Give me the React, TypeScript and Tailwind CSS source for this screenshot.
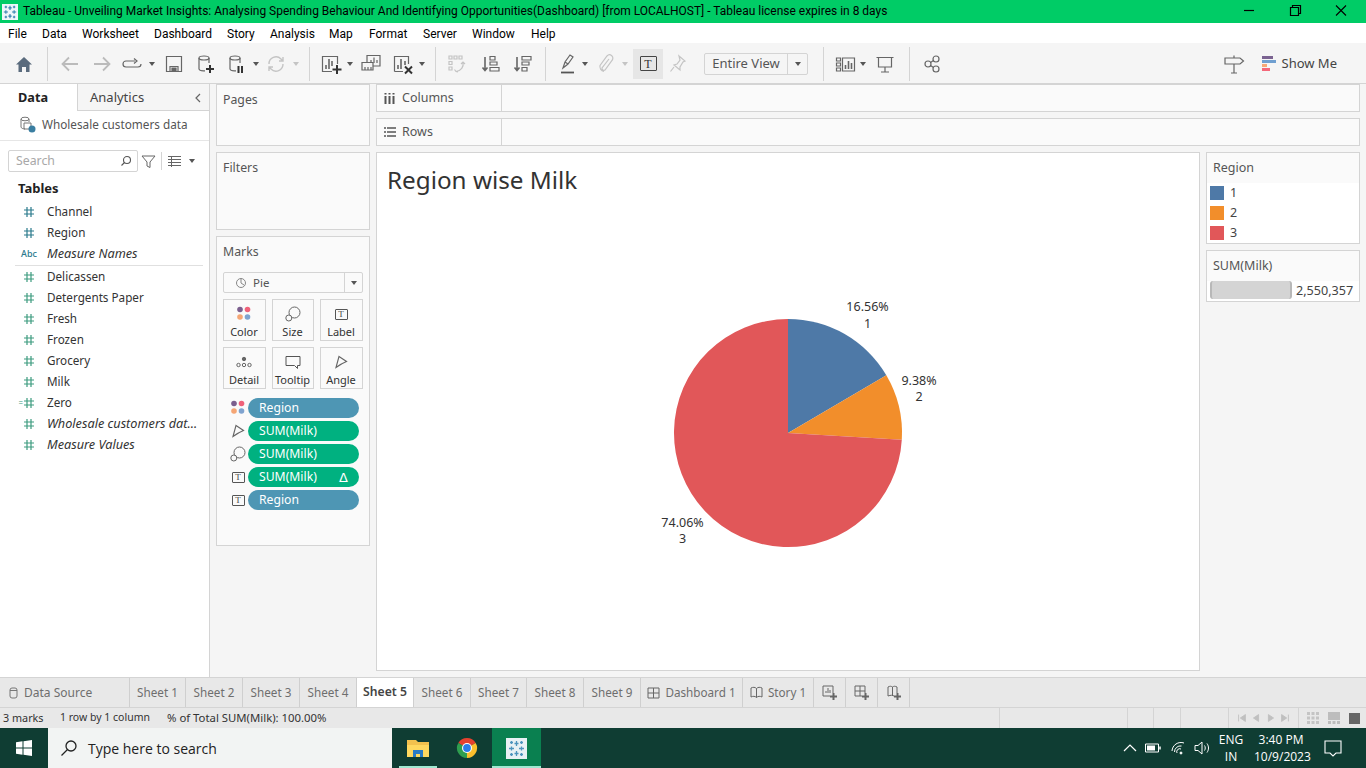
import React from "react";

const S = ({ children, className = "", w = 24 }: { children?: React.ReactNode; className?: string; w?: number }) => (
  <svg width={w} height={w} viewBox={`0 0 ${w} ${w}`} fill="none" stroke="currentColor" strokeWidth="1.2" className={"shrink-0 " + className}>
    {children}
  </svg>
);
const Caret = ({ c = "text-[#555]", ml = "" }: { c?: string; ml?: string }) => (
  <div className={"w-[10px] flex justify-center shrink-0 " + ml + " " + c}>
    <div className="w-0 h-0 border-l-[3.5px] border-r-[3.5px] border-t-[4px] border-l-transparent border-r-transparent border-t-current" />
  </div>
);
const Div = ({ ml }: { ml: string }) => <div className={"w-px h-[34px] bg-[#d4d4d4] shrink-0 " + ml} />;

const Hash = ({ c }: { c: string }) => (
  <svg width="12" height="12" viewBox="0 0 12 12" stroke={c} strokeWidth="1.2" fill="none">
    <path d="M4 1v10M8 1v10M1 4h10M1 8h10" />
  </svg>
);

const TBox = () => (
  <div className="w-[13px] h-[11px] border border-[#555] rounded-[1px] flex items-center justify-center text-[9px] leading-none text-[#444] font-['Liberation_Serif',serif] shrink-0">T</div>
);
const Dots = () => (
  <svg width="16" height="16" viewBox="0 0 16 16">
    <circle cx="4" cy="3.500" r="2.800" fill="#7b5f8e" />
    <circle cx="11.500" cy="3.500" r="2.800" fill="#f0627a" />
    <circle cx="4" cy="11" r="2.800" fill="#f5a675" />
    <circle cx="11.500" cy="11" r="2.800" fill="#7fa3cf" />
  </svg>
);
const SizeIcon = ({ c = "#666" }: { c?: string }) => (
  <svg width="16" height="16" viewBox="0 0 16 16" fill="none" stroke={c} strokeWidth="1">
    <circle cx="9.500" cy="6.500" r="5.500" />
    <circle cx="3.800" cy="12" r="3" fill="#fafafa" />
  </svg>
);
const AngleIcon = () => (
  <svg width="14" height="14" viewBox="0 0 14 14" fill="none" stroke="#666" strokeWidth="1.100">
    <path d="M5 1.500 12.500 6.500Q7.500 8.500 2 12.500Z" />
  </svg>
);

const fields = [
  { n: "Channel", c: "#2a7a8c" },
  { n: "Region", c: "#2a7a8c" },
];
const measures = [
  { n: "Delicassen", i: false },
  { n: "Detergents Paper", i: false },
  { n: "Fresh", i: false },
  { n: "Frozen", i: false },
  { n: "Grocery", i: false },
  { n: "Milk", i: false },
  { n: "Zero", i: false, eq: true },
  { n: "Wholesale customers dat...", i: true },
  { n: "Measure Values", i: true },
];

const Row = ({ icon, name, italic }: { icon: React.ReactNode; name: string; italic?: boolean }) => (
  <div className="h-[21px] flex items-center">
    <div className="w-[47px] pl-[20px] pr-[9px] flex justify-center shrink-0">{icon}</div>
    <span className={"text-[#333] whitespace-nowrap " + (italic ? "italic text-[12.700px]" : "text-[11.700px]")}>{name}</span>
  </div>
);

const MarkBtn = ({ icon, label, w }: { icon: React.ReactNode; label: string; w: string }) => (
  <div className={"h-[42px] border border-[#d4d4d4] flex flex-col items-center pt-[5px] pr-px " + w}>
    <div className="h-[18px] flex items-center justify-center">{icon}</div>
    <span className="text-[11px] leading-[14px] mt-[2px] text-[#333]">{label}</span>
  </div>
);

const Pill = ({ icon, label, color, delta }: { icon: React.ReactNode; label: string; color: string; delta?: boolean }) => (
  <div className="h-[20px] mb-[3px] flex items-center pl-[12px]">
    <div className="w-[18px] flex justify-center shrink-0 mr-[1px]">{icon}</div>
    <div className={"w-[111px] h-[20px] rounded-full text-white text-[12.200px] leading-[20px] pl-[11px] pr-[11px] flex justify-between items-center " + color}>
      <span>{label}</span>
      {delta && <span className="text-[13px] leading-none font-['DejaVu_Sans',sans-serif]">Δ</span>}
    </div>
  </div>
);

const Tab = ({ w, children, active }: { w: string; children: React.ReactNode; active?: boolean }) => (
  <div className={"h-full border-r border-[#cfcfcf] flex items-center justify-center shrink-0 whitespace-nowrap " + w + " " + (active ? "bg-white font-semibold text-[#444] text-[12.200px]" : "text-[#6e6e6e] text-[11.700px]")}>
    {children}
  </div>
);

const pt = (a: number, r = 114) => {
  const t = (a * Math.PI) / 180;
  return `${114 + r * Math.sin(t)} ${114 - r * Math.cos(t)}`;
};
const slice = (a: number, b: number) =>
  `M114 114 L${pt(a)} A114 114 0 ${b - a > 180 ? 1 : 0} 1 ${pt(b)} Z`;

const Flake = ({ size, c }: { size: number; c: string }) => (
  <svg width={size} height={size} viewBox="0 0 17 17" stroke={c} strokeWidth="1.300">
    <path d="M8.500 1v5M6.500 3.500h4M8.500 11v5M6.500 13.500h4M1 8.500h5M3.500 6.500v4M11 8.500h5M13.500 6.500v4M3.500 1v3M2 2.500h3M13.500 1v3M12 2.500h3M3.500 13v3M2 14.500h3M13.500 13v3M12 14.500h3" />
  </svg>
);

export default function App() {
  return (
    <div className="w-[1366px] h-[768px] overflow-hidden flex flex-col bg-[#f5f5f5] font-['Noto_Sans',sans-serif] text-[#333]">
      {/* Title bar */}
      <div className="h-[23px] bg-[#00cc66] flex items-center shrink-0 font-['Roboto',sans-serif]">
        <div className="w-[16px] h-[16px] ml-[2px] bg-[#eef6fa] flex items-center justify-center shrink-0">
          <Flake size={14} c="#2f7fae" />
        </div>
        <span className="ml-[5px] text-[11.970px] text-black whitespace-nowrap">Tableau - Unveiling Market Insights: Analysing Spending Behaviour And Identifying Opportunities(Dashboard) [from LOCALHOST] - Tableau license expires in 8 days</span>
        <div className="ml-auto mr-[2px] flex items-center text-black">
          <svg width="46" height="23" viewBox="0 0 46 23" stroke="currentColor" fill="none" strokeWidth="1.200"><path d="M18 10.500h10" /></svg>
          <svg width="46" height="23" viewBox="0 0 46 23" stroke="currentColor" fill="none" strokeWidth="1.200"><path d="M18.500 7.500h8v8h-8zM20.500 7.500v-2h8v8h-2" /></svg>
          <svg width="46" height="23" viewBox="0 0 46 23" stroke="currentColor" fill="none" strokeWidth="1.100"><path d="M18 5.500l10 10M28 5.500l-10 10" /></svg>
        </div>
      </div>

      {/* Menu bar */}
      <div className="h-[20px] bg-white flex items-center shrink-0 text-[12px] text-black font-['Roboto',sans-serif] pt-px">
        <div className="ml-[8px] w-[34px]">File</div>
        <div className="w-[40px]">Data</div>
        <div className="w-[72px]">Worksheet</div>
        <div className="w-[73px]">Dashboard</div>
        <div className="w-[43px]">Story</div>
        <div className="w-[59px]">Analysis</div>
        <div className="w-[40px]">Map</div>
        <div className="w-[54px]">Format</div>
        <div className="w-[49px]">Server</div>
        <div className="w-[59px]">Window</div>
        <div>Help</div>
      </div>

      {/* Toolbar */}
      <div className="h-[41px] bg-[#f5f5f5] border-b border-[#d4d4d4] flex items-center shrink-0 text-[#666] pt-px">
        <S className="ml-[12px] text-[#5a6b7d]">
          <path d="M4 12.500 12 5l8 7.500h-2.500V20H14v-5h-4v5H6.500v-7.500Z" fill="currentColor" stroke="none" />
        </S>
        <Div ml="ml-[11px]" />
        <S className="ml-[10px] text-[#bbb]" ><path d="M20 12H5M11 5.500 4.500 12l6.500 6.500" strokeWidth="1.800" /></S>
        <S className="ml-[8px] text-[#bbb]"><path d="M4 12h15M13 5.500l6.500 6.500-6.500 6.500" strokeWidth="1.800" /></S>
        <S className="ml-[6px]"><path d="M15 9H6a3 3 0 0 0 0 6h12a3 3 0 0 0 3-3" /><path d="M14 6.500 17 9l-3 2.500" /></S>
        <Caret ml="ml-[3px]" />
        <S className="ml-[5px]"><path d="M4.500 4.500h15v15h-15zM8 19.500v-5h8v5" /><path d="M10 19v-3h4v3" fill="currentColor" /></S>
        <S className="ml-[7px]"><ellipse cx="11" cy="6" rx="5" ry="2" /><path d="M6 6v11a5 2 0 0 0 6 1.800M16 6v5" /><path d="M17 13v8M13 17h8" stroke="#333" strokeWidth="2" /></S>
        <S className="ml-[7px]"><ellipse cx="11" cy="6" rx="5" ry="2" /><path d="M6 6v11a5 2 0 0 0 6 1.800M16 6v5" /><path d="M14.500 14v7M18 14v7" stroke="#333" strokeWidth="2" /></S>
        <Caret ml="ml-[3px]" />
        <S className="ml-[3px] text-[#c4c4c4]"><path d="M5 12a7 7 0 0 1 12-5l2 2M19 12a7 7 0 0 1-12 5l-2-2M19 5v4h-4M5 19v-4h4" strokeWidth="1.400" /></S>
        <Caret ml="ml-[3px]" c="text-[#c4c4c4]" />
        <Div ml="ml-[8px]" />
        <S className="ml-[9px]"><path d="M13 19.500H3.500v-15h15V12" /><path d="M7 17v-4M10 17V7M13 14V9" strokeWidth="1.600" /><path d="M18 13v9M13.500 17.500h9" stroke="#333" strokeWidth="2" /></S>
        <Caret ml="ml-[2px]" />
        <S className="ml-[4px]"><path d="M8 10V3.500h13V14h-7" /><path d="M12 11V8M15 11V5.500M18 11V8" /><path d="M3 10.500h11V18H3z" fill="#f5f5f5" /><path d="M6 18v-3M9 18v-3M12 18v-3" /></S>
        <S className="ml-[8px]"><path d="M3.500 19.500v-15h14V12M12 19.500H3.500" /><path d="M7 17v-4M10 17V7M14 13V9" strokeWidth="1.600" /><path d="M14 14.500l7 7M21 14.500l-7 7" stroke="#333" strokeWidth="2" /></S>
        <Caret ml="ml-[2px]" />
        <Div ml="ml-[8px]" />
        <S className="ml-[9px] text-[#c4c4c4]"><path d="M4 4h3v3H4zM9 4h3v3H9zM14 4h3v3h-3zM4 9.500h3v3H4zM4 15h3v3H4z" /><path d="M18 10c1 5-2 9-7 9.500M9.500 17.500 11 19.500l2 .5M16 12l2-2 2 2" /></S>
        <S className="ml-[9px]"><path d="M7 5v13M4.500 15.500 7 18.500l2.500-3" strokeWidth="1.600" /><path d="M12 4.500h5v3.500h-5zM12 10h7v3h-7zM12 15.500h9v3.500h-9z" /></S>
        <S className="ml-[8px]"><path d="M7 5v13M4.500 15.500 7 18.500l2.500-3" strokeWidth="1.600" /><path d="M12 4.500h9v3.500h-9zM12 10h7v3h-7zM12 15.500h5v3.500h-5z" /></S>
        <Div ml="ml-[11px]" />
        <S className="ml-[10px]"><path d="M7 16l2-6 5-7 3 2-5 7-5 4ZM9 10l3 2" /><path d="M5 20.500h13" stroke="#555" strokeWidth="1.800" /></S>
        <Caret />
        <S className="ml-[3px] text-[#c4c4c4]"><path d="M16 7l-7 9a2 2 0 0 0 3 2l7-9.500a3.300 3.300 0 0 0-5-4.500l-7 9.500a5 5 0 0 0 4 6" strokeWidth="1.200" /></S>
        <Caret ml="ml-[3px]" c="text-[#c4c4c4]" />
        <div className="ml-[3px] w-[30px] h-[30px] bg-[#e6e6e6] flex items-center justify-center shrink-0">
          <div className="w-[17px] h-[15px] border border-[#444] rounded-[1px] flex items-center justify-center text-[12px] leading-none text-[#333] font-['Liberation_Serif',serif]">T</div>
        </div>
        <S className="ml-[2px] text-[#c4c4c4]"><path d="M14 4l6 5-2 1-3 5 0 3-6-5 3-1 3-4ZM9 15l-3.500 4.500" /></S>
        <div className="ml-[15px] w-[104px] h-[22px] border border-[#d4d4d4] rounded-[2px] flex items-center shrink-0">
          <span className="w-[82px] text-center text-[13px] text-[#555] whitespace-nowrap">Entire View</span>
          <div className="flex-1 h-full border-l border-[#d4d4d4] flex items-center justify-center text-[#555]"><Caret /></div>
        </div>
        <Div ml="ml-[15px]" />
        <S className="ml-[10px]"><path d="M2.500 6h4v3h-4zM2.500 11h4v3h-4zM2.500 16h4v3h-4zM8.500 6h12v13h-12z" /><path d="M11.500 17v-4M14.500 17V9M17.500 17v-6" strokeWidth="1.600" /></S>
        <Caret />
        <S className="ml-[5px]"><path d="M3.500 5.500h17M5.500 5.500V15h13V5.500M12 15v5M8 20h8" /></S>
        <Div ml="ml-[12px]" />
        <S className="ml-[10px]"><circle cx="8" cy="12" r="3" /><circle cx="16" cy="7" r="3" /><circle cx="16" cy="17" r="3" /><path d="M10.500 10.500l3-2M10.500 13.500l3 2" /></S>
        <div className="ml-auto flex items-center">
          <S className=""><path d="M3 6h15l3.500 3-3.500 3H3zM12 12v9M9 21h6M12 3.500V6" /></S>
          <svg width="14" height="15" viewBox="0 0 14 15" className="ml-[16px]">
            <rect x="0" y="0" width="11" height="3" fill="#7b6391" />
            <rect x="0" y="4" width="14" height="3" fill="#6f9fd0" />
            <rect x="0" y="8" width="5" height="3" fill="#f6a877" />
            <rect x="0" y="12" width="8" height="3" fill="#f4687a" />
          </svg>
          <span className="ml-[6px] mr-[29px] text-[13px] text-[#444]">Show Me</span>
        </div>
      </div>

      {/* Main */}
      <div className="flex-1 min-h-0 flex border-b border-[#d4d4d4]">
        {/* Left data panel */}
        <div className="w-[210px] shrink-0 bg-white border-r border-[#d4d4d4] flex flex-col">
          <div className="h-[27px] flex shrink-0">
            <div className="w-[77px] flex items-center pl-[18px] text-[12.700px] font-bold text-[#222]">Data</div>
            <div className="flex-1 bg-[#f5f5f5] border-l border-b border-[#d4d4d4] flex items-center justify-between pl-[12px] pr-[6px] pt-px text-[13px] text-[#444]">
              <span>Analytics</span>
              <svg width="10" height="12" viewBox="0 0 10 12" fill="none" stroke="#666" strokeWidth="1.200"><path d="M7 2 3 6l4 4" /></svg>
            </div>
          </div>
          <div className="h-[30px] border-b border-[#e6e6e6] flex items-center pl-[19px] pb-[2px] shrink-0">
            <svg width="17" height="17" viewBox="0 0 17 17" fill="none" stroke="#777" strokeWidth="1">
              <ellipse cx="6" cy="3" rx="4" ry="1.800" /><path d="M2 3v8c0 1 2 2 4 2M10 3v3" />
              <path d="M5 7h7v6H5z" /><circle cx="13" cy="13" r="3.500" fill="#3a7ea1" stroke="none" />
            </svg>
            <span className="ml-[6px] text-[11.750px] text-[#555] whitespace-nowrap">Wholesale customers data</span>
          </div>
          <div className="h-[40px] flex items-center pl-[8px] shrink-0">
            <div className="w-[130px] h-[22px] border border-[#d4d4d4] rounded-[2px] flex items-center justify-between pl-[7px] pr-[5px]">
              <span className="text-[12.300px] text-[#a8a8a8]">Search</span>
              <svg width="12" height="12" viewBox="0 0 12 12" fill="none" stroke="#555" strokeWidth="1.100"><circle cx="7" cy="5" r="3.500" /><path d="M4.500 7.500 1.500 10.500" /></svg>
            </div>
            <svg width="15" height="15" viewBox="0 0 15 15" fill="none" stroke="#666" className="ml-[3px]"><path d="M1 2h13L9 8v5.500L6 12V8Z" /></svg>
            <div className="w-px h-[18px] bg-[#d4d4d4] ml-[5px]" />
            <svg width="13" height="11" viewBox="0 0 13 11" fill="none" stroke="#666" strokeWidth="1" className="ml-[6px]"><path d="M0 .5h13M0 3.500h13M0 6.500h13M0 9.500h13M3.500 0v11" /></svg>
            <div className="ml-[6px]"><Caret /></div>
          </div>
          <div className="h-[18px] -mt-px pl-[18px] text-[13px] leading-[16px] font-bold text-[#222] shrink-0">Tables</div>
          <div className="pt-[3px]">
            {fields.map((f) => <Row key={f.n} icon={<Hash c={f.c} />} name={f.n} />)}
            <div className="h-[21px] flex items-center">
              <div className="w-[47px] pl-[20px] pr-[9px] text-[9px] text-[#2a7a8c] font-medium shrink-0 text-center">Abc</div>
              <span className="text-[12.700px] italic text-[#333]">Measure Names</span>
            </div>
            <div className="h-px bg-[#e0e0e0] ml-[15px] mr-[6px] mt-px" />
            {measures.map((m) => (
              <Row
                key={m.n}
                name={m.n}
                italic={m.i}
                icon={
                  <div className="relative">
                    <Hash c="#3d9b7f" />
                    {m.eq && <span className="absolute right-[12px] top-[-1px] text-[8px] leading-[14px] text-[#3d9b7f]">=</span>}
                  </div>
                }
              />
            ))}
          </div>
        </div>

        {/* Cards column */}
        <div className="w-[154px] ml-[6px] shrink-0 flex flex-col gap-[6px]">
          <div className="h-[62px] bg-[#fafafa] border border-[#d4d4d4] pl-[6px] pt-[6px] text-[12.300px] text-[#555]">Pages</div>
          <div className="h-[78px] bg-[#fafafa] border border-[#d4d4d4] pl-[6px] pt-[6px] text-[12.300px] text-[#555]">Filters</div>
          <div className="h-[310px] bg-[#fafafa] border border-[#d4d4d4]">
            <div className="pl-[6px] pt-[6px] text-[12.300px] text-[#555] h-[35px]">Marks</div>
            <div className="mx-[6px] h-[21px] border border-[#d4d4d4] rounded-[2px] flex items-center">
              <svg width="12" height="12" viewBox="0 0 12 12" fill="none" stroke="#888" className="ml-[11px]"><circle cx="6" cy="6" r="4.500" /><path d="M6 1.500V6l3 2" /></svg>
              <span className="ml-[6px] text-[11.500px] text-[#555]">Pie</span>
              <div className="ml-auto w-[18px] h-full border-l border-[#d4d4d4] flex items-center justify-center"><Caret /></div>
            </div>
            <div className="mx-[6px] mt-[6px] flex justify-between">
              <MarkBtn w="w-[43px]" icon={<Dots />} label="Color" />
              <MarkBtn w="w-[42px]" icon={<SizeIcon />} label="Size" />
              <MarkBtn w="w-[43px]" icon={<TBox />} label="Label" />
            </div>
            <div className="mx-[6px] mt-[6px] flex justify-between">
              <MarkBtn w="w-[43px]" icon={<svg width="16" height="12" viewBox="0 0 16 12" fill="none" stroke="#666"><circle cx="8" cy="3" r="1.700" fill="#666" /><circle cx="2.500" cy="9" r="1.700" /><circle cx="8" cy="9" r="1.700" /><circle cx="13.500" cy="9" r="1.700" /></svg>} label="Detail" />
              <MarkBtn w="w-[42px]" icon={<svg width="16" height="15" viewBox="0 0 16 15" fill="none" stroke="#555"><path d="M1 1.500h14v9h-2.500v3l-3-3H1Z" /></svg>} label="Tooltip" />
              <MarkBtn w="w-[43px]" icon={<AngleIcon />} label="Angle" />
            </div>
            <div className="mt-[9px]">
              <Pill icon={<Dots />} label="Region" color="bg-[#4e96b4]" />
              <Pill icon={<AngleIcon />} label="SUM(Milk)" color="bg-[#00b180]" />
              <Pill icon={<SizeIcon />} label="SUM(Milk)" color="bg-[#00b180]" />
              <Pill icon={<TBox />} label="SUM(Milk)" color="bg-[#00b180]" delta />
              <Pill icon={<TBox />} label="Region" color="bg-[#4e96b4]" />
            </div>
          </div>
        </div>

        {/* Right area */}
        <div className="flex-1 min-w-0 ml-[6px] mr-[6px] flex flex-col">
          <div className="h-[28px] bg-[#fafafa] border border-[#d4d4d4] flex shrink-0">
            <div className="w-[125px] h-full border-r border-[#d4d4d4] flex items-center pl-[7px] text-[12.500px] text-[#555]">
              <svg width="11" height="11" viewBox="0 0 11 11" stroke="#555" strokeWidth="2" fill="none"><path d="M1.500 3v8M5.500 3v8M9.500 3v8M1.500 0v1.500M5.500 0v1.500M9.500 0v1.500" /></svg>
              <span className="ml-[7px]">Columns</span>
            </div>
          </div>
          <div className="h-[28px] mt-[6px] bg-[#fafafa] border border-[#d4d4d4] flex shrink-0">
            <div className="w-[125px] h-full border-r border-[#d4d4d4] flex items-center pl-[7px] text-[12.500px] text-[#555]">
              <svg width="12" height="10" viewBox="0 0 12 10" stroke="#555" strokeWidth="1.500" fill="none"><path d="M0 1h2M3 1h9M0 5h2M3 5h9M0 9h2M3 9h9" /></svg>
              <span className="ml-[6px]">Rows</span>
            </div>
          </div>
          <div className="flex-1 min-h-0 mt-[6px] mb-[6px] flex gap-[6px]">
            {/* Canvas */}
            <div className="w-[824px] shrink-0 bg-white border border-[#d4d4d4] flex flex-col">
              <div className="pl-[10px] pt-[10px] text-[24.250px] leading-[33px] text-[#333] h-[126px] shrink-0">Region wise Milk</div>
              <div className="flex justify-center">
                <svg width="360" height="300" viewBox="-66 -40 360 300" className="overflow-visible ml-[-1px]">
                  <path d={slice(0, 59.62)} fill="#4e79a7" />
                  <path d={slice(59.62, 93.39)} fill="#f28e2b" />
                  <path d={slice(93.39, 360)} fill="#e15759" />
                  <g fontSize="12.500" fill="#333" textAnchor="middle" fontFamily="'Noto Sans', sans-serif">
                    <text x="193.500" y="-8.500">16.56%</text>
                    <text x="193.500" y="8.500">1</text>
                    <text x="245" y="65.500">9.38%</text>
                    <text x="245" y="81.500">2</text>
                    <text x="8.500" y="207.500">74.06%</text>
                    <text x="8.500" y="223.500">3</text>
                  </g>
                </svg>
              </div>
            </div>
            {/* Legends */}
            <div className="flex-1 flex flex-col gap-[6px]">
              <div className="h-[92px] bg-white border border-[#d4d4d4]">
                <div className="h-[30px] bg-[#fafafa] pl-[6px] flex items-center text-[12.500px] text-[#555]">Region</div>
                {[
                  ["1", "bg-[#4e79a7]"],
                  ["2", "bg-[#f28e2b]"],
                  ["3", "bg-[#e15759]"],
                ].map(([n, c]) => (
                  <div key={n} className="h-[20px] flex items-center pl-[3px]">
                    <div className={"w-[14px] h-[14px] " + c} />
                    <span className="ml-[6px] text-[12.500px] text-[#444]">{n}</span>
                  </div>
                ))}
              </div>
              <div className="h-[52px] bg-white border border-[#d4d4d4]">
                <div className="h-[30px] bg-[#fafafa] pl-[6px] flex items-center text-[12.500px] text-[#555]">SUM(Milk)</div>
                <div className="flex items-center pl-[3px] h-[20px]">
                  <div className="w-[82px] h-[18px] bg-[#d4d4d4] rounded-[3px] border-x-2 border-[#b8b8b8] -mt-[2px]" />
                  <span className="ml-[4px] text-[12.600px] text-[#444]">2,550,357</span>
                </div>
              </div>
            </div>
          </div>
        </div>
      </div>

      {/* Tabs */}
      <div className="h-[30px] bg-[#e8e8e8] border-b border-[#d4d4d4] flex shrink-0">
        <div className="w-[130px] border-r border-[#cfcfcf] flex items-center pl-[9px] text-[12px] text-[#6e6e6e] shrink-0">
          <svg width="9" height="12" viewBox="0 0 9 12" fill="none" stroke="#777"><rect x="1" y="1" width="7" height="10" rx="2" /><path d="M1 3.500h7" /></svg>
          <span className="ml-[6px]">Data Source</span>
        </div>
        <Tab w="w-[56px]">Sheet 1</Tab>
        <Tab w="w-[57px]">Sheet 2</Tab>
        <Tab w="w-[57px]">Sheet 3</Tab>
        <Tab w="w-[57px]">Sheet 4</Tab>
        <Tab w="w-[57px]" active>Sheet 5</Tab>
        <Tab w="w-[57px]">Sheet 6</Tab>
        <Tab w="w-[56px]">Sheet 7</Tab>
        <Tab w="w-[57px]">Sheet 8</Tab>
        <Tab w="w-[57px]">Sheet 9</Tab>
        <Tab w="w-[102px]">
          <svg width="13" height="12" viewBox="0 0 13 12" fill="none" stroke="#666" className="mr-[5px]"><path d="M1 1h11v10H1zM6.500 1v10M1 6h11" /></svg>
          Dashboard 1
        </Tab>
        <Tab w="w-[71px]">
          <svg width="13" height="13" viewBox="0 0 13 13" fill="none" stroke="#666" className="mr-[5px]"><path d="M1 2c2-1 4-1 5.500.5C8 1 10 1 12 2v9c-2-1-4-1-5.500.5C5 10 3 10 1 11ZM6.500 2.500v9" /></svg>
          Story 1
        </Tab>
        <Tab w="w-[32px]"><svg width="15" height="15" viewBox="0 0 15 15" fill="none" stroke="#666"><path d="M8 11H1V1h10v7M4 8V6M6 8V3M8 8V5" /><path d="M11.500 8v7M8 11.500h7" strokeWidth="2" /></svg></Tab>
        <Tab w="w-[32px]"><svg width="15" height="15" viewBox="0 0 15 15" fill="none" stroke="#666"><path d="M8 11H1V1h10v7M6 1v10M1 6h10" /><path d="M11.500 8v7M8 11.500h7" strokeWidth="2" /></svg></Tab>
        <Tab w="w-[32px]"><svg width="15" height="15" viewBox="0 0 15 15" fill="none" stroke="#666"><path d="M8 11c-2-1-3-1-6 0V2c2-1 3-1 4.500 0C8 1 9 1 11 2v6M6.500 2v9" /><path d="M11.500 8v7M8 11.500h7" strokeWidth="2" /></svg></Tab>
      </div>

      {/* Status bar */}
      <div className="h-[20px] bg-[#e8e8e8] flex items-center shrink-0 text-[#333]">
        <span className="ml-[3px] w-[57px] text-[10.800px]">3 marks</span>
        <span className="w-[107px] text-[10.500px]">1 row by 1 column</span>
        <span className="text-[11.350px]">% of Total SUM(Milk): 100.00%</span>
        <div className="ml-auto flex h-full">
          <div className="w-[128px] border-l border-[#d4d4d4]" />
          <div className="w-[26px] border-l border-[#d4d4d4]" />
          <div className="w-[27px] border-l border-[#d4d4d4]" />
          <div className="w-[48px] border-l border-[#d4d4d4]" />
          <div className="w-[70px] border-l border-[#d4d4d4] flex items-center justify-around px-[6px]">
            {["M7 2v8M15 2 9 6l6 4Z", "M14 2 8 6l6 4Z", "M8 2l6 4-6 4Z", "M15 2v8M7 2l6 4-6 4Z"].map((d) => (
              <svg key={d} width="12" height="12" viewBox="4 0 14 12" fill="#c0c0c0" stroke="#c0c0c0"><path d={d} /></svg>
            ))}
          </div>
          <div className="w-[68px] border-l border-[#d4d4d4] flex items-center justify-between pl-[8px] pr-[6px]">
            <svg width="12" height="12" viewBox="0 0 12 12" fill="#c4c4c4"><path d="M0 0h3v3H0zM4.500 0h3v3h-3zM9 0h3v3H9zM0 4.500h3v3H0zM4.500 4.500h3v3h-3zM9 4.500h3v3H9zM0 9h3v3H0zM4.500 9h3v3h-3zM9 9h3v3H9z" /></svg>
            <svg width="12" height="12" viewBox="0 0 12 12" fill="#bdbdbd"><path d="M0 0h12v8H0zM0 9h3v3H0zM4.500 9h3v3h-3zM9 9h3v3H9z" /></svg>
            <div className="w-[11px] h-[11px] bg-[#666]" />
          </div>
        </div>
      </div>

      {/* Taskbar */}
      <div className="h-[40px] bg-[#0f3d33] flex items-center shrink-0 text-white font-['Open_Sans',sans-serif]">
        <div className="w-[48px] flex justify-center">
          <svg width="16" height="16" viewBox="0 0 16 16" fill="#fff"><path d="M0 2.300 6.500 1.300V7.500H0ZM7.500 1.200 16 0V7.500H7.500ZM0 8.500H6.500V14.700L0 13.700ZM7.500 8.500H16V16L7.500 14.800Z" /></svg>
        </div>
        <div className="w-[344px] h-full bg-[#f2f4f3] flex items-center pl-[12px] shrink-0">
          <svg width="18" height="18" viewBox="0 0 18 18" fill="none" stroke="#222" strokeWidth="1.300"><circle cx="11" cy="7" r="5" /><path d="M7.500 10.500 1.500 16.500" /></svg>
          <span className="ml-[10px] text-[14px] text-[#222]">Type here to search</span>
        </div>
        <div className="w-[52px] h-full flex items-center justify-center relative">
          <svg width="22" height="18" viewBox="0 0 22 18">
            <path d="M0 1h9l2 2h11v15H0Z" fill="#f2c14e" />
            <path d="M0 6h22v12H0Z" fill="#ffd85f" />
            <path d="M6 11h10v7h-3v-3H9v3H6Z" fill="#2b7bc4" />
          </svg>
          <div className="absolute bottom-0 left-[7px] right-[7px] h-[2px] bg-[#9fe8d0]" />
        </div>
        <div className="w-[46px] h-full flex items-center justify-center">
          <svg width="24" height="24" viewBox="0 0 24 24">
            <path d="M12 12 L3.300 7 A10 10 0 0 1 20.700 7 Z" fill="#e5412f" />
            <path d="M12 12 L20.700 7 A10 10 0 0 1 12 22 Z" fill="#fbc02d" />
            <path d="M12 12 L12 22 A10 10 0 0 1 3.300 7 Z" fill="#2e9e4f" />
            <circle cx="12" cy="12" r="5" fill="#fff" /><circle cx="12" cy="12" r="3.900" fill="#2b7de9" />
          </svg>
        </div>
        <div className="w-[49px] ml-[2px] h-full bg-[#0a8050] flex items-center justify-center relative">
          <div className="w-[21px] h-[21px] bg-[#e8f1f4] flex items-center justify-center">
            <Flake size={17} c="#4d94bd" />
          </div>
          <div className="absolute bottom-0 left-0 right-0 h-[2px] bg-[#9fe8d0]" />
        </div>
        <div className="ml-auto flex items-center h-full">
          <svg width="14" height="8" viewBox="0 0 14 8" fill="none" stroke="#fff" strokeWidth="1.200"><path d="M1 7l6-6 6 6" /></svg>
          <svg width="16" height="10" viewBox="0 0 16 10" fill="none" stroke="#fff" className="ml-[8px]"><path d="M.5 1h13v8H.5z" /><path d="M2 2.500h8v5H2z" fill="#fff" stroke="none" /><path d="M15 3.500v3" strokeWidth="1.500" /></svg>
          <svg width="14" height="14" viewBox="0 0 14 14" fill="none" stroke="#fff" strokeWidth="1" className="ml-[10px]"><path d="M1 10a9 9 0 0 1 12-8M3.500 11a6 6 0 0 1 7-6M6 12a3 3 0 0 1 4-4" /><circle cx="10" cy="12" r="1" fill="#fff" /></svg>
          <svg width="17" height="14" viewBox="0 0 17 14" fill="none" stroke="#fff" className="ml-[9px]"><path d="M1 4.500h3L8 1v12L4 9.500H1ZM10.500 4.500c1 1.500 1 3.500 0 5M13 2.500c2 3 2 6 0 9" /></svg>
          <div className="ml-[6px] w-[28px] text-center text-[12px] leading-[17px]">ENG<br />IN</div>
          <div className="ml-[9px] w-[54px] text-center text-[12px] leading-[17px] whitespace-nowrap">3:40 PM<br />10/9/2023</div>
          <svg width="18" height="17" viewBox="0 0 18 17" fill="none" stroke="#fff" strokeWidth="1.100" className="ml-[16px] mr-[24px]"><path d="M1 1h16v12h-5l-3 3-3-3H1Z" /></svg>
        </div>
      </div>
    </div>
  );
}
